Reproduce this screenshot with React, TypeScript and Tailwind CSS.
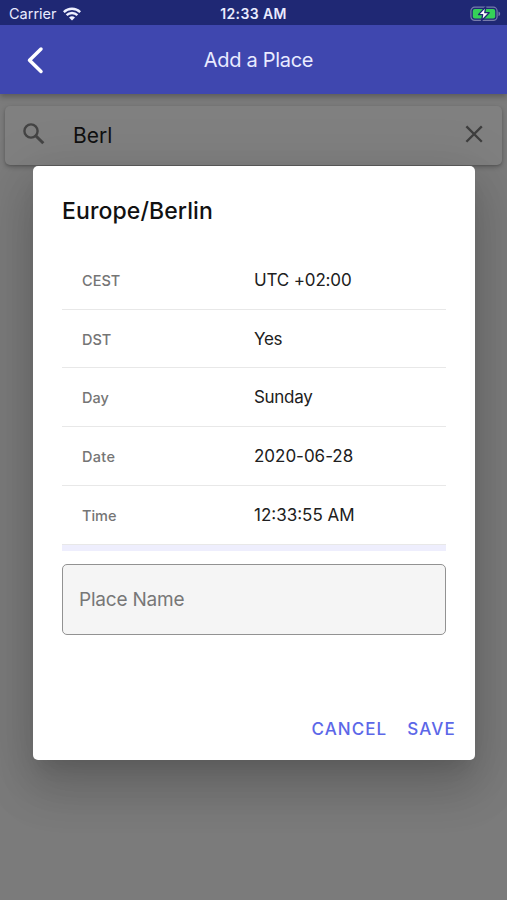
const details = [
  { label: "CEST", value: "UTC +02:00", labelStyle: "tracking-[0px]", valueStyle: "tracking-[-0.15px]" },
  { label: "DST", value: "Yes", labelStyle: "tracking-[0px]", valueStyle: "tracking-[-0.3px]" },
  { label: "Day", value: "Sunday", labelStyle: "tracking-[0px]", valueStyle: "tracking-[-0.3px]" },
  { label: "Date", value: "2020-06-28", labelStyle: "tracking-[0.3px]", valueStyle: "tracking-[-0.02px]" },
  { label: "Time", value: "12:33:55 AM", labelStyle: "tracking-[0px]", valueStyle: "tracking-[0px]" },
];

function WifiIcon() {
  return (
    <svg width="18" height="14" viewBox="0 0 18 14" fill="none" stroke="#eef0ff" strokeWidth="2.4">
      <path d="M0.8 5.1a11.8 11.8 0 0 1 16.4 0" />
      <path d="M3.6 8.1a7.8 7.8 0 0 1 10.8 0" />
      <path d="M9 13.6 6 10.6a4.3 4.3 0 0 1 6 0Z" fill="#eef0ff" stroke="none" />
    </svg>
  );
}

function BatteryIcon() {
  return (
    <svg width="31" height="16" viewBox="0 0 31 16">
      <rect x="0.9" y="1.2" width="26.2" height="13.2" rx="3.8" fill="none" stroke="#777cab" strokeWidth="1.2" />
      <path d="M28.5 5.5c2.2.9 2.2 3.7 0 4.6Z" fill="#777cab" />
      <rect x="2.8" y="3" width="22.4" height="9.6" rx="2" fill="#35d158" />
      <path d="M15.8.8 8.5 8.6h4.2l-1.2 6.2 7.7-8.1h-4.4Z" fill="#fff" stroke="#1f2874" strokeWidth="1.3" strokeLinejoin="round" />
    </svg>
  );
}

export default function App() {
  return (
    <div className="relative h-[900px] w-[507px] overflow-hidden bg-[#7b7b7b] font-['Inter','Liberation_Sans',sans-serif]">
      <header className="relative h-[94px] bg-[#3f47af] text-[#e9ebff] shadow-[0_2px_5px_rgba(0,0,0,0.2),0_5px_6px_rgba(0,0,0,0.08)]">
        <div className="grid h-[25px] grid-cols-3 items-center bg-[#1f2874] pt-[2px]">
          <div className="flex items-center gap-[6px] pl-[9px]">
            <span className="text-[14.5px] leading-5 tracking-[0px]">Carrier</span>
            <WifiIcon />
          </div>
          <span className="text-center text-[14px] font-semibold leading-5 tracking-[0.4px]">12:33 AM</span>
          <div className="flex justify-end pr-[6px]">
            <BatteryIcon />
          </div>
        </div>
        <div className="grid h-[69px] grid-cols-[80px_1fr_70px] items-center">
          <button className="pl-[27px]" aria-label="Back">
            <svg width="17" height="28" viewBox="0 0 17 28" fill="none" stroke="#fff" strokeWidth="3.5" strokeLinecap="round" strokeLinejoin="round">
              <path d="M14 3 2.5 14.2 14 25.5" />
            </svg>
          </button>
          <h1 className="text-center text-[20px] leading-7 tracking-[-0.3px]">Add a Place</h1>
        </div>
      </header>

      <div className="mx-[5px] mt-[12px] flex h-[59px] items-center rounded-[5px] bg-[#808080] pl-[18px] pr-[18px] shadow-[0_2px_5px_rgba(0,0,0,0.24),0_1px_2px_rgba(0,0,0,0.12)]">
        <svg className="-mt-1" width="22" height="22" viewBox="0 0 22 22" fill="none" stroke="#444" strokeWidth="2.4">
          <circle cx="8" cy="8" r="6.6" />
          <path d="m13 13 7.3 7.3" strokeWidth="3" />
        </svg>
        <span className="ml-[28px] flex-1 text-[21px] leading-7 text-[#101010]">Berl</span>
        <svg className="-mt-[3px]" width="20" height="20" viewBox="0 0 20 20" fill="none" stroke="#3e3e3e" strokeWidth="2.3">
          <path d="m2.4 2.4 15.4 15.4M17.8 2.4 2.4 17.8" />
        </svg>
      </div>

      <section
        role="dialog"
        className="absolute left-[33px] top-[166px] flex h-[594px] w-[442px] flex-col rounded-[5px] bg-white px-[29px] shadow-[0_13px_18px_-8px_rgba(0,0,0,0.1),0_29px_46px_4px_rgba(0,0,0,0.12),0_11px_56px_10px_rgba(0,0,0,0.1)]"
      >
        <h2 className="mt-[29px] text-[23px] font-medium leading-8 tracking-[0.1px] text-[#111]">Europe/Berlin</h2>
        <div className="mt-[24px] flex h-[293.5px] flex-col">
          {details.map((item) => (
            <div key={item.label} className="flex flex-1 items-center border-b border-[#e8e8e8] pl-[20px]">
              <span className={`w-[172px] pt-[2px] text-[14.5px] font-medium leading-5 text-[#757575] ${item.labelStyle}`}>{item.label}</span>
              <span className={`text-[17px] leading-6 text-[#202020] ${item.valueStyle}`}>{item.value}</span>
            </div>
          ))}
        </div>
        <div className="h-[6.5px] bg-[#eeeefd]" />
        <div className="mt-[13px] flex h-[71px] items-center rounded-[5px] border-[1.5px] border-[#929292] bg-[#f5f5f5] pl-[16px] text-[19px] leading-7 tracking-[-0.2px] text-[#777]">
          <span>Place Name</span>
        </div>
        <div className="-mr-[10px] mt-[80px] flex justify-end gap-[20px] text-[17px] font-medium leading-7 text-[#5c67e8]">
          <button className="tracking-[1.05px]">CANCEL</button>
          <button className="tracking-[1.2px]">SAVE</button>
        </div>
      </section>
    </div>
  );
}
